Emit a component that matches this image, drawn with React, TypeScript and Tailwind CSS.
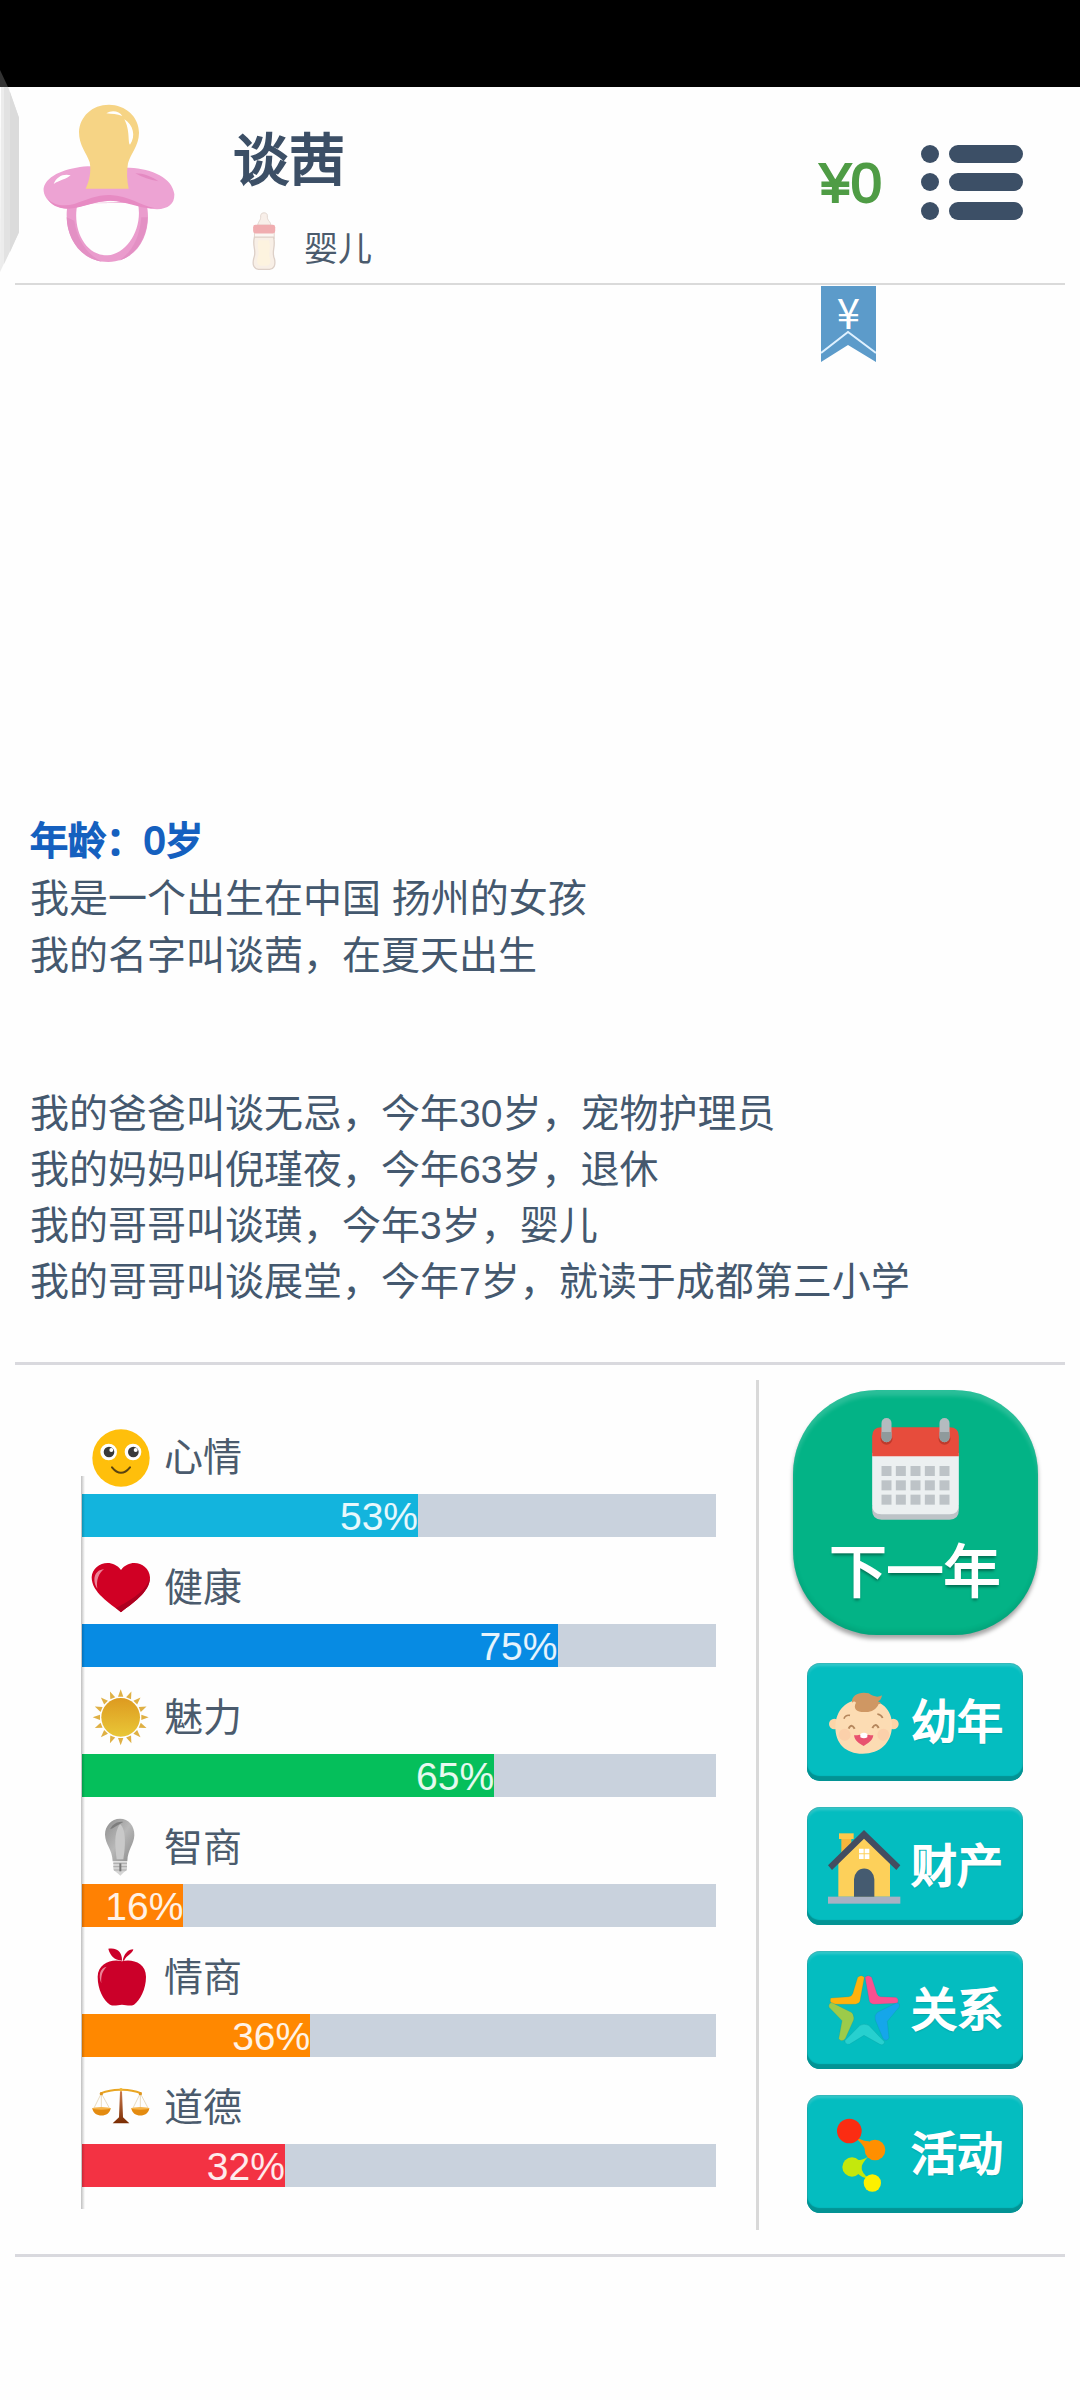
import type { ReactNode } from "react";

const LABEL_FONT = "font-['Liberation_Sans','Noto_Sans_CJK_SC',sans-serif]";

function PacifierIcon() {
  return (
    <svg viewBox="128 100 396 474" className="h-[158px] w-[132px] shrink-0" aria-hidden="true">
      <path
        fillRule="evenodd"
        fill="#ea9ccd"
        d="M203 398 C186 470 222 574 324 574 C426 570 456 470 438 396 Z M232 398 C214 470 252 556 322 554 C382 550 430 470 412 394 Z"
      />
      <path d="M199 440 C200 505 242 562 304 573 C262 552 230 510 222 450 Z" fill="#e390c4" />
      <path d="M442 440 C440 500 408 554 356 570 C396 544 418 500 423 440 Z" fill="#e390c4" />
      <path
        fill="#eda3d3"
        d="M262 287 C200 292 140 312 130 352 C126 388 168 416 208 414 C250 408 280 392 330 390 C385 390 420 412 470 416 C505 414 523 400 522 370 C516 322 455 294 388 291 Z"
      />
      <path
        fill="#e78bc3"
        d="M142 384 C160 404 190 408 222 400 C262 386 290 372 330 373 C385 376 420 404 462 412 C420 416 385 392 330 390 C280 392 250 410 208 414 C178 416 150 402 142 384 Z"
      />
      <path
        fill="#f6d485"
        d="M326 102 C375 102 416 138 416 186 C416 225 390 250 383 278 C378 305 380 330 385 354 L256 354 C268 330 273 300 268 275 C258 245 236 225 236 184 C238 138 275 102 326 102 Z"
      />
      <path d="M318 128 C335 116 358 122 366 136 C350 130 335 130 318 128 Z" fill="#fff" />
      <path d="M372 146 C398 162 408 196 389 222 C382 216 390 180 372 146 Z" fill="#fff" />
      <path d="M160 340 C168 318 190 308 211 314 C198 326 178 328 160 340 Z" fill="#fff" />
      <path d="M405 308 C430 308 455 318 474 332 C450 328 425 320 405 308 Z" fill="#e48ac2" />
    </svg>
  );
}

function BottleIcon() {
  return (
    <svg viewBox="756 422 74 176" className="h-[58px] w-[26px] shrink-0" aria-hidden="true">
      <path d="M774 462 C776 448 784 450 783 432 C784 422 803 422 803 432 C802 450 812 448 814 462 Z" fill="#f8efe9" stroke="#e2d6ce" strokeWidth="3" />
      <rect x="764" y="480" width="60" height="22" fill="#fbf6f2" stroke="#e2d6ce" strokeWidth="3" />
      <path
        d="M764 498 H822 C830 530 814 540 825 565 C829 585 822 595 810 596 H776 C762 594 757 582 762 562 C772 538 756 528 764 498 Z"
        fill="#f8efe6"
        stroke="#ddd0c8"
        strokeWidth="4"
      />
      <path d="M776 508 H808 C816 535 804 545 812 566 C814 580 808 584 800 585 H782 C772 582 770 572 774 560 C782 542 770 530 776 508 Z" fill="#fdf3df" />
      <rect x="760" y="461" width="67" height="26" rx="7" fill="#f0adb0" />
    </svg>
  );
}

function MenuIcon() {
  return (
    <svg viewBox="0 0 102 75" className="h-[75px] w-[102px]" fill="#3c4f66" aria-hidden="true">
      {[0, 28, 57].map((y) => (
        <g key={y}>
          <circle cx="9" cy={y + 9} r="9" />
          <rect x="28" y={y} width="74" height="18" rx="9" />
        </g>
      ))}
    </svg>
  );
}

function FaceIcon() {
  return (
    <>
      <circle cx="183" cy="264" r="86" fill="#ffbf0b" />
      {[146, 219].map((x) => (
        <g key={x}>
          <circle cx={x} cy="246" r="25" fill="#fff" />
          <circle cx={x + 1} cy="246" r="16" fill="#3a3a3a" />
          <circle cx={x + 8} cy="240" r="6" fill="#fff" />
        </g>
      ))}
      <path d="M156 292 Q183 325 210 292" fill="none" stroke="#5a4310" strokeWidth="6" strokeLinecap="round" />
    </>
  );
}

function HeartIcon() {
  return (
    <>
      <path d="M183 727 C150 700 95 668 95 622 C97 580 155 562 183 600 C211 562 268 580 270 622 C270 668 216 700 183 727 Z" fill="#d00024" />
      <path d="M183 727 C216 700 270 668 270 622 C262 660 215 690 168 714 Z" fill="#ad0020" />
      <path d="M112 656 C96 632 102 600 132 598 C116 610 108 630 112 656 Z" fill="#ec8296" />
    </>
  );
}

const SUN_RAYS = Array.from({ length: 16 }, (_, i) => i * 22.5);

function SunIcon() {
  return (
    <>
      <defs>
        <linearGradient id="sun" x1="0" y1="0" x2="0" y2="1">
          <stop offset="0" stopColor="#dd9a20" />
          <stop offset="1" stopColor="#e9c737" />
        </linearGradient>
      </defs>
      {SUN_RAYS.map((angle) => (
        <path key={angle} d="M174 50 L182 28 L190 50 Z" fill="#dfb044" transform={`rotate(${angle} 182 112)`} />
      ))}
      <circle cx="182" cy="112" r="58" fill="url(#sun)" />
    </>
  );
}

function BulbIcon() {
  return (
    <>
      <defs>
        <linearGradient id="bulb" x1="0" y1="0" x2="1" y2="1">
          <stop offset="0" stopColor="#8f8f8f" />
          <stop offset="0.5" stopColor="#b8b8b8" />
          <stop offset="1" stopColor="#8a8a8a" />
        </linearGradient>
      </defs>
      <path d="M180 416 C206 416 224 438 223 466 C222 494 203 508 202 544 H158 C157 508 136 494 135 464 C135 438 154 416 180 416 Z" fill="url(#bulb)" />
      <path d="M180 432 C200 448 196 505 190 538 H170 C166 500 160 460 180 432 Z" fill="#c9c9c9" />
      <path d="M150 448 C158 430 178 422 190 426 C174 434 160 445 150 448 Z" fill="#7d7d7d" />
      <path d="M160 545 H201 V570 L190 578 L181 587 L171 578 L160 570 Z" fill="#d4d4d4" />
      <path d="M160 550 H201 M160 560 H201 M162 570 H199" stroke="#aaa" strokeWidth="3" />
      <path d="M181 550 V574" stroke="#777" strokeWidth="6" />
    </>
  );
}

function AppleIcon() {
  return (
    <>
      <path
        d="M186 34 C215 26 258 38 258 80 C258 118 240 150 222 164 C210 170 198 164 186 164 C174 164 162 170 150 164 C130 150 113 118 113 80 C114 40 155 26 186 34 Z"
        fill="#cb0029"
      />
      <path d="M145 -4 C175 -8 186 8 186 32 C162 30 150 16 145 -4 Z" fill="#cb0029" />
      <path d="M188 32 C192 12 204 -2 220 -2 C218 10 200 16 192 32 Z" fill="#cb0029" />
      <path d="M124 100 C114 76 120 54 140 50 C128 62 122 76 124 100 Z" fill="#ec8296" />
    </>
  );
}

function ScalesIcon() {
  return (
    <>
      <defs>
        <linearGradient id="post" x1="0" y1="0" x2="0" y2="1">
          <stop offset="0" stopColor="#c97a4c" />
          <stop offset="1" stopColor="#7a2c02" />
        </linearGradient>
      </defs>
      <path d="M180 424 H186 L189 502 L208 520 H158 L177 502 Z" fill="url(#post)" />
      <path d="M122 430 Q152 418 183 419 Q214 418 244 430" fill="none" stroke="#e9a522" strokeWidth="6" />
      <circle cx="183" cy="419" r="5" fill="#f0b636" />
      <path d="M124 430 L102 474 M124 430 V472 M124 430 L148 474 M241 430 L219 474 M241 430 V472 M241 430 L264 474" stroke="#dcc9a0" strokeWidth="2" />
      <circle cx="124" cy="431" r="5" fill="#df9720" />
      <circle cx="241" cy="431" r="5" fill="#df9720" />
      <path d="M97 474 H152 C150 504 99 504 97 474 Z" fill="#e48b10" />
      <path d="M214 474 H268 C266 504 216 504 214 474 Z" fill="#e48b10" />
      <ellipse cx="124" cy="475" rx="27" ry="4" fill="#f6b44a" />
      <ellipse cx="241" cy="475" rx="27" ry="4" fill="#f6b44a" />
    </>
  );
}

function CalendarIcon() {
  return (
    <svg viewBox="394 175 260 306" className="h-[102px] w-[87px]" aria-hidden="true">
      <path d="M394 440 H654 V452 Q654 480 626 480 H422 Q394 480 394 452 Z" fill="#bdc3c7" />
      <path d="M394 280 H654 V436 Q654 464 626 464 H422 Q394 464 394 436 Z" fill="#ecf0f1" />
      <path d="M394 290 V230 Q394 203 422 203 H626 Q654 203 654 230 V290 Z" fill="#e74c3c" />
      {[437, 611].map((x) => (
        <g key={x}>
          <circle cx={x} cy="237" r="18" fill="#bf3a2c" />
          <rect x={x - 15} y="175" width="30" height="73" rx="15" fill="#b4bbbf" />
          <path d={`M${x - 15} 217 h30 v16 a15 15 0 0 1 -30 0 Z`} fill="#8f9a9c" />
        </g>
      ))}
      {[319, 362, 405].map((y) =>
        [422, 465, 509, 552, 596].map((x) => (
          <rect key={`${x}-${y}`} x={x} y={y} width="30" height="30" fill="#bdc3c7" />
        ))
      )}
    </svg>
  );
}

function BabyIcon() {
  return (
    <>
      <circle cx="283" cy="222" r="16" fill="#fbd5a8" />
      <circle cx="460" cy="222" r="16" fill="#fbd5a8" />
      <path d="M371 148 C425 148 458 180 456 228 C454 280 420 311 368 311 C316 311 286 280 286 230 C288 180 318 148 371 148 Z" fill="#fcdcb3" />
      <circle cx="314" cy="254" r="18" fill="#fbd0aa" />
      <circle cx="430" cy="254" r="18" fill="#fbd0aa" />
      <path d="M336 158 C334 134 360 124 386 130 C402 142 416 142 426 136 C424 148 420 152 414 154 C426 160 424 162 416 162 C408 180 392 188 372 186 C350 186 338 176 348 158 C344 152 340 154 336 158 Z" fill="#cf9763" />
      <path d="M312 206 Q316 194 330 196 M412 192 Q424 194 428 204" fill="none" stroke="#b5875d" strokeWidth="5" />
      <path d="M326 236 Q334 218 344 236 M397 234 Q407 216 416 234" fill="none" stroke="#b5875d" strokeWidth="6" />
      <path d="M342 256 Q352 256 360 254 L372 262 L384 254 Q392 256 400 256 C398 274 382 280 371 288 C358 280 344 274 342 256 Z" fill="#e8526f" />
      <path d="M361 252 Q372 244 382 252 V262 Q372 268 361 262 Z" fill="#fff" />
    </>
  );
}

function HouseIcon() {
  return (
    <>
      <rect x="304" y="562" width="30" height="60" fill="#f6b63c" />
      <rect x="297" y="550" width="44" height="17" fill="#fdc94b" />
      <path d="M295 740 V635 L372 558 L450 635 V740 Z" fill="#fdd05a" />
      <path d="M264 646 L372 540 L481 646 L469 660 L372 566 L276 660 Z" fill="#434d61" />
      <rect x="264" y="740" width="217" height="21" fill="#a9b1c3" />
      <path d="M342 740 V688 A30 32 0 0 1 403 688 V740 Z" fill="#455b70" />
      <path d="M357 596 h14 v14 h-14 Z M374 596 h14 v14 h-14 Z M357 613 h14 v14 h-14 Z M374 613 h14 v14 h-14 Z" fill="#fff" />
    </>
  );
}

function StarIcon() {
  return (
    <g stroke="#0b8f94" strokeOpacity="0.35" strokeWidth="2" strokeLinejoin="round">
      <path d="M353 142 Q364 132 373 142 L360 214 Q357 222 347 223 H278 Q267 216 272 204 L326 200 Q335 199 338 191 Z" fill="#ffb20d" />
      <path d="M375 142 Q384 132 395 142 L411 191 Q414 199 422 200 L468 202 Q479 208 472 220 L402 223 Q391 222 388 214 Z" fill="#fb5090" />
      <path d="M267 232 Q264 219 276 218 L334 247 Q344 254 341 270 L316 326 Q305 338 296 326 L306 272 Z" fill="#9ccb4a" />
      <path d="M477 232 Q482 218 469 219 L412 247 Q402 256 406 270 L429 326 Q440 336 447 324 L442 274 Z" fill="#15a6ea" />
      <path d="M314 332 L360 286 Q372 279 386 286 L434 336 Q430 348 420 343 L372 316 L328 343 Q316 344 314 332 Z" fill="#27d0cf" />
    </g>
  );
}

function MoleculeIcon() {
  return (
    <>
      <path d="M350 625 Q372 636 385 636 L378 660 Q370 640 350 625 Z" fill="#ff8f00" stroke="#ff8f00" strokeWidth="4" />
      <path d="M352 690 Q370 690 384 680 Q366 700 364 712 Q366 732 386 744 Q372 748 352 730 Z" fill="#c4e80c" />
      <circle cx="328" cy="603" r="37" fill="#fb2c12" />
      <circle cx="405" cy="660" r="31" fill="#ff8f00" />
      <circle cx="336" cy="711" r="29" fill="#c4e80c" />
      <circle cx="397" cy="759" r="26" fill="#fdf000" />
    </>
  );
}

type Stat = {
  id: string;
  label: string;
  value: number;
  bar: string;
  viewBox: string;
  icon: ReactNode;
};

const stats: Stat[] = [
  { id: "mood", label: "心情", value: 53, bar: "bg-[#13b4dd]", viewBox: "96 177 174 174", icon: <FaceIcon /> },
  { id: "health", label: "健康", value: 75, bar: "bg-[#078be3]", viewBox: "96 567 174 174", icon: <HeartIcon /> },
  { id: "charm", label: "魅力", value: 65, bar: "bg-[#05bf5b]", viewBox: "96 27 174 174", icon: <SunIcon /> },
  { id: "iq", label: "智商", value: 16, bar: "bg-[#ff8103]", viewBox: "96 417 174 174", icon: <BulbIcon /> },
  { id: "eq", label: "情商", value: 36, bar: "bg-[#ff8800]", viewBox: "96 -3 174 174", icon: <AppleIcon /> },
  { id: "moral", label: "道德", value: 32, bar: "bg-[#f33243]", viewBox: "96 387 174 174", icon: <ScalesIcon /> },
];

const actions = [
  { label: "幼年", viewBox: "264 108 216 216", icon: <BabyIcon /> },
  { label: "财产", viewBox: "264 540 216 216", icon: <HouseIcon /> },
  { label: "关系", viewBox: "264 132 216 216", icon: <StarIcon /> },
  { label: "活动", viewBox: "264 564 216 216", icon: <MoleculeIcon /> },
];

const birthLines = ["我是一个出生在中国 扬州的女孩", "我的名字叫谈茜，在夏天出生"];

const familyLines = [
  "我的爸爸叫谈无忌，今年30岁，宠物护理员",
  "我的妈妈叫倪瑾夜，今年63岁，退休",
  "我的哥哥叫谈璜，今年3岁，婴儿",
  "我的哥哥叫谈展堂，今年7岁，就读于成都第三小学",
];

function StatRow({ stat }: { stat: Stat }) {
  return (
    <li>
      <div className="flex h-[58px] items-center gap-[14px] pl-[10px]">
        <svg viewBox={stat.viewBox} className="h-[58px] w-[58px] shrink-0 overflow-visible" aria-hidden="true">
          {stat.icon}
        </svg>
        <span id={`stat-${stat.id}`} className="text-[39px] leading-[56px] text-[#4b5b6d]">
          {stat.label}
        </span>
      </div>
      <div
        role="progressbar"
        aria-labelledby={`stat-${stat.id}`}
        aria-valuenow={stat.value}
        aria-valuemin={0}
        aria-valuemax={100}
        className="mt-[7px] h-[43px] bg-[#c9d2dd]"
      >
        <div
          className={`h-full text-right text-[39px] leading-[46px] text-white/90 ${stat.bar}`}
          style={{ width: `${stat.value}%` }}
        >
          {stat.value}%
        </div>
      </div>
    </li>
  );
}

export default function App() {
  return (
    <div className={`relative flex min-h-screen flex-col bg-[#fefefe] ${LABEL_FONT}`}>
      <div className="h-[87px] bg-black" />

      {/* edge swipe handle */}
      <svg viewBox="0 0 19 202" className="absolute top-[70px] left-0 h-[202px] w-[19px]" aria-hidden="true">
        <path d="M0 0 L8 17 H0 Z" fill="#333" />
        <path d="M1 17 H8 L19 48 V162 L0 202 Z" fill="#ececec" />
        <path d="M4 17 H8 L19 48 V162 L4 194 Z" fill="#e2e2e2" />
        <path d="M10 22 L19 48 V162 L10 182 Z" fill="#dbdbdb" />
      </svg>

      <header className="relative mx-[15px] flex h-[198px] items-center border-b-2 border-[#dadada] pr-[42px] pb-[5px] pl-[28px]">
        <PacifierIcon />
        <div className="ml-[58px] flex-1 self-start pt-[42px]">
          <h1 className="text-[56px] leading-[64px] font-normal text-[#3c4f66] [-webkit-text-stroke:2px_#3c4f66] [stroke-linejoin:round]">
            谈茜
          </h1>
          <div className="mt-[19px] flex items-end gap-[27px] pl-[18px]">
            <BottleIcon />
            <span className="text-[34px] leading-[42px] text-[#4b5b6d]">婴儿</span>
          </div>
        </div>
        <span className="text-[56px] leading-[60px] text-[#4f9c45] [-webkit-text-stroke:2px_#4f9c45]">¥0</span>
        <button type="button" aria-label="菜单" className="ml-[39px]">
          <MenuIcon />
        </button>
        <button
          type="button"
          className="absolute top-[199px] right-[189px] flex h-[76px] w-[55px] justify-center font-['Noto_Sans_CJK_SC',sans-serif] text-[42px] leading-[50px] text-white"
        >
          <svg viewBox="0 0 55 76" className="absolute inset-0 h-full w-full" aria-hidden="true">
            <path d="M0 0 H55 V76 L27 59 L0 76 Z" fill="#5c9bca" />
            <path d="M0 67 L27 46 L55 67" fill="none" stroke="#dff1ff" strokeWidth="2" />
          </svg>
          <span className="relative">¥</span>
        </button>
      </header>

      <main className="flex flex-1 flex-col">
        <section className="flex flex-1 flex-col justify-end px-[30px] pb-[52px] text-[39px] leading-[57px] text-[#44586e]">
          <h2 className="text-[38px] font-normal text-[#1560bf] [-webkit-text-stroke:2px_#1560bf] [stroke-linejoin:round]">
            年龄：0岁
          </h2>
          {birthLines.map((line) => (
            <p key={line}>{line}</p>
          ))}
          <div className="mt-[102px] leading-[56px]">
            {familyLines.map((line) => (
              <p key={line}>{line}</p>
            ))}
          </div>
        </section>

        <section className="mx-[15px] flex border-y-3 border-[#d9d9de] pt-[15px] pb-[24px]">
          <div className="flex-1 pt-[49px] pr-[40px] pl-[67px]">
            <ul className="relative space-y-[22px]">
              {stats.map((stat) => (
                <StatRow key={stat.id} stat={stat} />
              ))}
              <li
                aria-hidden="true"
                className="absolute top-[47px] -bottom-[22px] -left-px w-[4px] bg-linear-to-r from-black/25 to-transparent"
              />
            </ul>
          </div>

          <div className="flex w-[309px] flex-col items-center border-l-3 border-[#d9d9d9] pt-[10px] pb-[17px] pl-[6px]">
            <button
              type="button"
              className="flex h-[245px] w-[245px] flex-col items-center rounded-[84px] bg-[#03b386] pt-[28px] text-white shadow-[0_4px_4px_rgba(0,0,0,0.35),inset_0_6px_4px_rgba(255,255,255,0.16),inset_0_-4px_4px_rgba(0,0,0,0.08)]"
            >
              <CalendarIcon />
              <span className="mt-[17px] text-[57px] leading-[70px] [-webkit-text-stroke:2px_white] [stroke-linejoin:round] [text-shadow:0_3px_3px_rgba(0,0,0,0.4)]">
                下一年
              </span>
            </button>
            <div className="mt-[28px] flex flex-col gap-[26px]">
              {actions.map((action) => (
                <button
                  key={action.label}
                  type="button"
                  className="flex h-[118px] w-[216px] items-center gap-[11px] rounded-[13px] bg-[#04bdc0] pl-[21px] text-white shadow-[inset_0_-5px_1px_#039394,inset_0_3px_3px_rgba(255,255,255,0.2),inset_0_0_2px_rgba(0,0,0,0.4)]"
                >
                  <svg viewBox={action.viewBox} className="h-[72px] w-[72px] shrink-0 overflow-visible" aria-hidden="true">
                    {action.icon}
                  </svg>
                  <span className="text-[46px] leading-[64px] whitespace-nowrap [-webkit-text-stroke:2px_white] [stroke-linejoin:round] [text-shadow:0_1px_2px_rgba(0,0,0,0.4)]">
                    {action.label}
                  </span>
                </button>
              ))}
            </div>
          </div>
        </section>
      </main>

      <div className="h-[143px]" />
    </div>
  );
}
